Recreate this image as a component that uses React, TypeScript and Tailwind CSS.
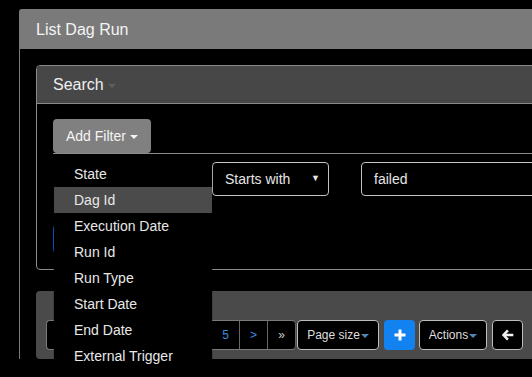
import React from 'react'

const Caret = ({ className }: { className: string }) => (
  <span className={`inline-block w-0 h-0 border-x-[4px] border-x-transparent border-t-[4px] ${className}`} />
)

const filterFields = [
  'State',
  'Dag Id',
  'Execution Date',
  'Run Id',
  'Run Type',
  'Start Date',
  'End Date',
  'External Trigger',
]

// first cells sit under the open filter menu
const pages = ['', '', '', '', '', '', '5', '>', '»']

export default function App() {
  return (
    <div className="w-[532px] h-[377px] overflow-hidden bg-black pl-[19px] pt-[9px] font-['Liberation_Sans',Arial,sans-serif]">
      {/* List panel */}
      <div className="w-[580px] border-l border-t border-[#7a7a7a] rounded-tl-[3px]">
        <div className="h-[39px] bg-[#7a7a7a] flex items-center px-[16px] text-[16px] text-[#f4f4f4]">
          List Dag Run
        </div>

        <div className="pl-[16px] pt-[16px]">
          {/* Search panel */}
          <div className="border border-[#8a8a8a] rounded-[4px]">
            <div className="h-[38px] bg-[#474747] border-b border-[#8a8a8a] rounded-t-[3px] flex items-center gap-[4px] px-[16px] text-[16px] text-[#efefef]">
              Search
              <Caret className="border-t-[#5e5e5e] mt-[2px]" />
            </div>

            <div className="pl-[16px] pt-[15px] pb-[16px]">
              {/* Add filter tab */}
              <div className="relative h-[35px] border-b border-[#8a8a8a]">
                <button className="h-[34px] w-[98px] rounded-[4px] bg-[#808080] text-[14px] text-[#f4f4f4] flex items-center pl-[13px] gap-[4px]">
                  Add Filter
                  <Caret className="border-t-[#f4f4f4] mt-[2px]" />
                </button>

                {/* Dropdown menu */}
                <ul className="absolute left-0 top-[36px] z-10 w-[160px] pt-[5px] pb-[6px] bg-black border border-[rgba(0,0,0,0.15)] bg-clip-padding">
                  {filterFields.map((f) => (
                    <li
                      key={f}
                      className={`h-[26px] flex items-center pl-[20px] text-[14px] text-[#e8e8e8] ${f === 'Dag Id' ? 'bg-[#4b4b4b]' : ''}`}
                    >
                      {f}
                    </li>
                  ))}
                </ul>
              </div>

              {/* Filter row */}
              <div className="flex mt-[8px]">
                <div className="w-[159px] shrink-0" />
                <div className="w-[117px] shrink-0 h-[34px] border border-[#c4c4c4] rounded-[4px] flex items-center justify-between pl-[12px] pr-[8px] text-[14px] text-[#e6e6e6]">
                  Starts with
                  <span className="text-[9px] text-[#e6e6e6]">▼</span>
                </div>
                <div className="ml-[32px] w-[300px] shrink-0 h-[34px] border border-[#c4c4c4] rounded-[4px] flex items-center pl-[12px] text-[14px] text-[#e6e6e6]">
                  failed
                </div>
              </div>

              <button className="block mt-[29px] h-[28px] w-[80px] rounded-[4px] bg-[#0b62d6]" />
            </div>
          </div>

          {/* Pagination / actions bar */}
          <div className="mt-[21px] h-[68px] bg-[#4a4a4a] rounded-[4px] pl-[10px] pt-[29px] flex items-start">
            <div className="flex shrink-0 h-[30px] border-y border-l border-[#7a7a7a] rounded-[4px] bg-black">
              {pages.map((p, i) => (
                <div
                  key={i}
                  className={`${i === 0 ? 'w-[25px]' : 'w-[28px]'} h-full border-r border-[#666] flex items-center justify-center text-[12px] ${p === '»' ? 'text-[#cfcfcf]' : 'text-[#3d8de0]'} ${i === pages.length - 1 ? 'rounded-r-[4px] border-[#8a8a8a]' : ''}`}
                >
                  {p}
                </div>
              ))}
            </div>

            <button className="ml-px shrink-0 w-[82px] h-[30px] rounded-[4px] border border-[#bdbdbd] bg-black flex items-center justify-center gap-[1px] text-[12px] text-[#dedede]">
              Page size
              <Caret className="border-t-[#4f86b8] mt-[1px]" />
            </button>

            <button className="ml-[5px] shrink-0 w-[31px] h-[30px] rounded-[4px] bg-[#1282f0] flex items-center justify-center">
              <svg width="12" height="12" viewBox="0 0 12 12">
                <rect x="4.5" y="0.5" width="3" height="11" fill="#fff" />
                <rect x="0.5" y="4.5" width="11" height="3" fill="#fff" />
              </svg>
            </button>

            <button className="ml-[4px] shrink-0 w-[68px] h-[30px] rounded-[4px] border border-[#bdbdbd] bg-black flex items-center justify-center gap-[1px] text-[12px] text-[#dedede]">
              Actions
              <Caret className="border-t-[#4f86b8] mt-[1px]" />
            </button>

            <button className="ml-[5px] shrink-0 w-[31px] h-[30px] rounded-[4px] border border-[#bdbdbd] bg-black flex items-center justify-center">
              <svg width="13" height="12" viewBox="0 0 13 12">
                <path d="M6 0.5 L0.8 6 L6 11.5 L7.8 9.7 L5.3 7.3 H12.3 V4.7 H5.3 L7.8 2.3 Z" fill="#f2f2f2" />
              </svg>
            </button>
          </div>
        </div>
      </div>
    </div>
  )
}
